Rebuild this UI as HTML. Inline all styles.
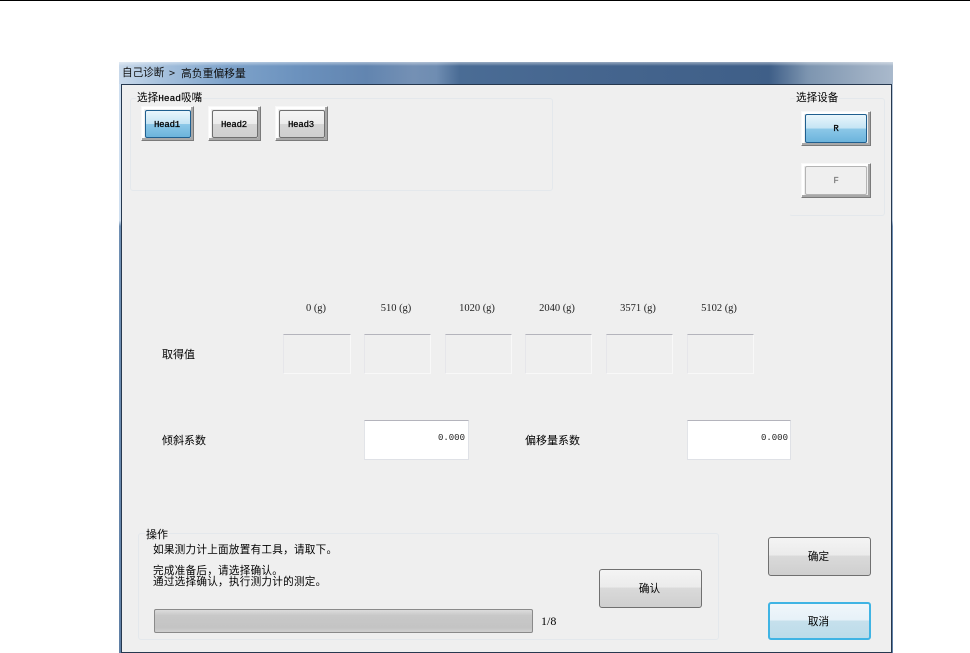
<!DOCTYPE html>
<html lang="zh-CN"><head><meta charset="utf-8"><style>
html,body{margin:0;padding:0;background:#fff}
#p{position:relative;width:970px;height:653px;overflow:hidden;background:#fff;font-family:"WenQuanYi Zen Hei","Noto Sans CJK SC",sans-serif;font-size:10.6px;color:#000;line-height:14px}
#p div{position:absolute;box-sizing:border-box}
.t{white-space:nowrap}
.s{letter-spacing:.25px}
.g{border:1px solid #e4e8ec;border-radius:3px}
.lg{background:#efefef;padding:0 1px;white-space:nowrap}
.lg span{font-family:"Liberation Mono",monospace;font-size:9.5px;-webkit-text-stroke:.2px #000}
.bo{background:#efefef;border:1px solid;border-color:#f8f8f8 #7a7a7a #7a7a7a #f8f8f8;box-shadow:inset -2px -2px 0 #a8a8a8,inset 2px 2px 0 #fff}
.bi{border:1px solid #6f6f6f;border-radius:2px;background:linear-gradient(#f5f5f5 0,#ececec 50%,#d6d6d6 51%,#cfcfcf 100%);text-align:center}
.on{border:1px solid #1f5f8f;background:linear-gradient(#e9f6fc 0,#c4e4f4 50%,#8cc8e8 51%,#6cb4dc 100%)}
.m{font-family:"Liberation Mono",monospace;font-size:9px;letter-spacing:-.2px;padding-right:2px;-webkit-text-stroke:.25px #000}
.v{border:1px solid;border-color:#b4b4bc #f8f8f8 #f8f8f8 #e6e6ea;background:#efefef;top:334px;height:40px}
.w{background:#fff;border:1px solid;border-color:#b4b4bc #dfe1e6 #dfe1e6 #e2e4e8;top:420px;height:40px;text-align:right;padding:10px 2px 0 0;font-family:"Liberation Mono",monospace;font-size:9px;color:#222}
.h{top:302px;font-family:"Liberation Serif",serif;font-size:10.5px;white-space:nowrap;text-align:center;width:68px;color:#222}
.b{border:1px solid #707070;border-radius:3px;background:linear-gradient(#f4f4f4 0,#ebebeb 47%,#dadada 48%,#cfcfcf 100%);text-align:center;line-height:38px;padding-right:2px}
</style></head><body><div id="p">
<div style="left:0;top:0;width:970px;height:1px;background:#000"></div>
<div style="left:119px;top:62px;width:774px;height:22px;background:linear-gradient(90deg,#c9d9ea 0,#a9c3de 5%,#7ea3cb 14%,#6a90bc 24%,#6285b0 32%,#7490b4 38%,#6f8db2 41%,#4a6c95 44%,#45658e 62%,#3f5f88 84%,#7d95b0 89%,#9fb0c4 97%,#a9b9cc 100%)"></div>
<div style="left:119px;top:62px;width:774px;height:4px;background:linear-gradient(rgba(255,255,255,.45),rgba(255,255,255,0))"></div>
<div class="t" style="left:122px;top:66px;font-size:10.6px;color:#101010">自己诊断</div>
<div class="t" style="left:169px;top:66px;font-size:11px;color:#101010">&gt;</div>
<div class="t" style="left:181px;top:66px;font-size:10.8px;color:#101010">高负重偏移量</div>
<div style="left:119px;top:84px;width:3px;height:569px;background:linear-gradient(#cfdff0 0,#cfdff0 24%,#6f8fb3 25%,#5f7fa5 100%)"></div>
<div style="left:890px;top:84px;width:3px;height:569px;background:linear-gradient(#b6c6d8 0,#b6c6d8 24%,#6f8fb3 25%,#5f7fa5 100%)"></div>
<div style="left:121px;top:84px;width:771px;height:569px;background:#efefef;border:1px solid #26384f"></div>

<div class="g" style="left:130px;top:98px;width:423px;height:93px"></div>
<div class="lg" style="left:136px;top:91px">选择<span>Head</span>吸嘴</div>
<div class="bo" style="left:141px;top:106px;width:53px;height:35px"></div>
<div class="bi on m" style="left:145px;top:110px;width:46px;height:28px;line-height:28px">Head1</div>
<div class="bo" style="left:208px;top:106px;width:53px;height:35px"></div>
<div class="bi m" style="left:212px;top:110px;width:46px;height:28px;line-height:28px">Head2</div>
<div class="bo" style="left:275px;top:106px;width:53px;height:35px"></div>
<div class="bi m" style="left:279px;top:110px;width:46px;height:28px;line-height:28px">Head3</div>

<div class="g" style="left:789px;top:98px;width:96px;height:118px;border-left-color:#efefef"></div>
<div class="lg" style="left:795px;top:91px">选择设备</div>
<div class="bo" style="left:801px;top:111px;width:70px;height:35px"></div>
<div class="bi on m" style="left:805px;top:114px;width:62px;height:29px;line-height:28px;padding-right:0">R</div>
<div class="bo" style="left:801px;top:163px;width:70px;height:35px"></div>
<div class="bi m" style="left:805px;top:166px;width:62px;height:29px;line-height:28px;padding-right:0;background:#efefef;border-color:#b4b4b4;color:#808080;-webkit-text-stroke:.25px #808080">F</div>

<div class="h" style="left:282px">0 (g)</div>
<div class="h" style="left:362px">510 (g)</div>
<div class="h" style="left:443px">1020 (g)</div>
<div class="h" style="left:523px">2040 (g)</div>
<div class="h" style="left:604px">3571 (g)</div>
<div class="h" style="left:685px">5102 (g)</div>

<div class="t" style="left:162px;top:347px;font-size:11px">取得值</div>
<div class="v" style="left:283px;width:68px"></div>
<div class="v" style="left:364px;width:67px"></div>
<div class="v" style="left:445px;width:67px"></div>
<div class="v" style="left:525px;width:67px"></div>
<div class="v" style="left:606px;width:67px"></div>
<div class="v" style="left:687px;width:67px"></div>

<div class="t" style="left:162px;top:433px;font-size:11px">倾斜系数</div>
<div class="w" style="left:364px;width:105px;padding-right:3px">0.000</div>
<div class="t" style="left:525px;top:433px;font-size:11px">偏移量系数</div>
<div class="w" style="left:687px;width:104px">0.000</div>

<div class="g" style="left:138px;top:533px;width:581px;height:107px"></div>
<div class="lg" style="left:145px;top:527px;font-size:11px">操作</div>
<div class="t s" style="left:153px;top:543px">如果测力计上面放置有工具，请取下。</div>
<div class="t s" style="left:153px;top:564px">完成准备后，请选择确认。</div>
<div class="t s" style="left:153px;top:575px">通过选择确认，执行测力计的测定。</div>
<div style="left:154px;top:609px;width:379px;height:24px;border:1px solid #8a8a8a;border-radius:2px;background:linear-gradient(#dcdcdc 0,#c8c8c8 25%,#c4c4c4 80%,#d0d0d0 100%)"></div>
<div class="t" style="left:541px;top:614px;font-family:'Liberation Serif',serif;font-size:12px">1/8</div>

<div class="b" style="left:599px;top:569px;width:103px;height:39px">确认</div>
<div class="b" style="left:768px;top:537px;width:103px;height:39px">确定</div>
<div class="b" style="left:768px;top:602px;width:103px;height:38px;border:2px solid #3fb4e4;line-height:36px;background:linear-gradient(#f0f6fa 0,#e6f1f8 48%,#c6e0ec 49%,#bcdcea 100%)">取消</div>
</div></body></html>
